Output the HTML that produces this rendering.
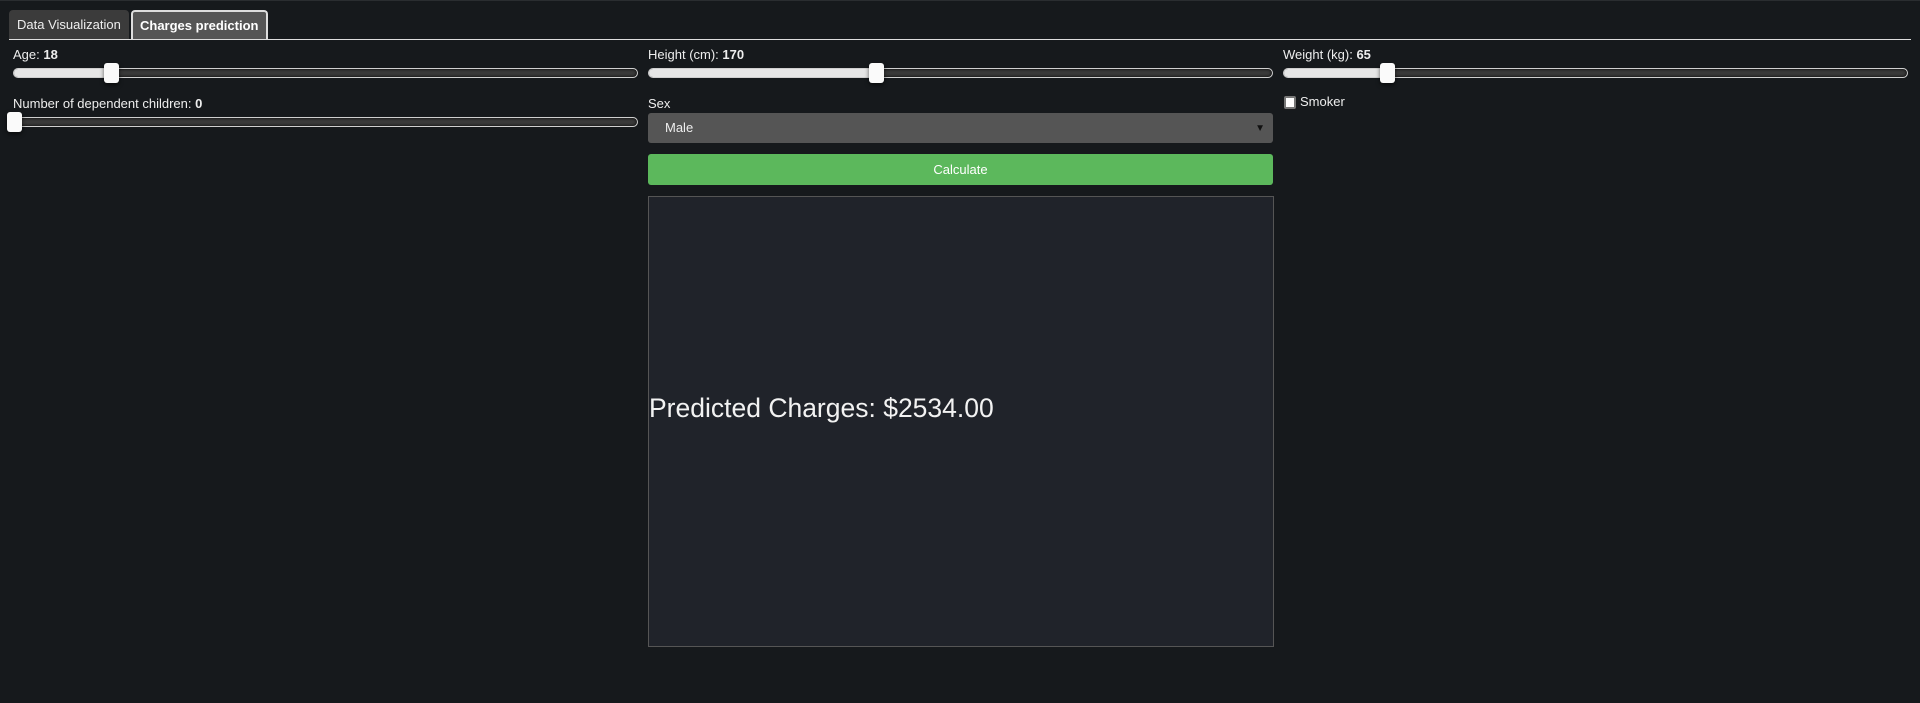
<!DOCTYPE html>
<html><head><style>
*{box-sizing:border-box;margin:0;padding:0}
body{width:1920px;height:703px;background:#16191c;font-family:"Liberation Sans",Arial,sans-serif;color:#e8e8e8;position:relative;overflow:hidden}
.a{position:absolute;white-space:nowrap}
.tab{top:10px;height:29px;font-size:13px;line-height:29px;padding-left:8px;border-radius:4px 4px 0 0}
.lbl{font-size:13px;color:#eee}
.lbl b{font-weight:bold}
.track{height:10px;border-radius:5px;background:#3a3a3a;border:1px solid #cfcfcf;box-shadow:inset 0 0 3px #000}
.fill{position:absolute;left:0;top:0;bottom:0;background:#e6e6e6;border-radius:5px 0 0 5px}
.thumb{width:15px;height:20px;background:#fafafa;border-radius:3px;box-shadow:0 2px 4px rgba(0,0,0,.6)}
</style></head><body>
<div class="a" style="left:0;top:0;width:1920px;height:1px;background:#2a2d30"></div>
<div class="a tab" style="left:9px;width:120px;background:#3b3b3b;color:#eee">Data Visualization</div>
<div class="a tab" style="left:131px;width:137px;background:#555;color:#fff;font-weight:bold;border:2px solid #ddd;border-bottom:none;line-height:27px;padding-left:7px">Charges prediction</div>
<div class="a" style="left:9px;top:39px;width:1902px;height:1px;background:#ddd"></div>

<div class="a lbl" style="left:13px;top:47px">Age: <b>18</b></div>
<div class="a track" style="left:13px;top:68px;width:625px"><div class="fill" style="width:100px"></div></div>
<div class="a thumb" style="left:104px;top:63px"></div>

<div class="a lbl" style="left:13px;top:96px">Number of dependent children: <b>0</b></div>
<div class="a track" style="left:13px;top:117px;width:625px"></div>
<div class="a thumb" style="left:7px;top:112px"></div>

<div class="a lbl" style="left:648px;top:47px">Height (cm): <b>170</b></div>
<div class="a track" style="left:648px;top:68px;width:625px"><div class="fill" style="width:228px"></div></div>
<div class="a thumb" style="left:869px;top:63px"></div>

<div class="a lbl" style="left:648px;top:96px">Sex</div>
<div class="a" style="left:648px;top:113px;width:625px;height:30px;background:#555;border-radius:3px;font-size:13px;line-height:30px;padding-left:17px;color:#eee">Male<span style="position:absolute;right:8px;top:1px;font-size:10px;color:#111">&#9660;</span></div>

<div class="a" style="left:648px;top:154px;width:625px;height:31px;background:#5cb85c;border-radius:3px;font-size:13px;line-height:31px;text-align:center;color:#fff">Calculate</div>

<div class="a" style="left:648px;top:196px;width:626px;height:451px;background:#20232a;border:1px solid #555"></div>
<div class="a" style="left:649px;top:391px;font-size:26.5px;color:#f2f2f2;line-height:34px">Predicted Charges: $2534.00</div>

<div class="a lbl" style="left:1283px;top:47px">Weight (kg): <b>65</b></div>
<div class="a track" style="left:1283px;top:68px;width:625px"><div class="fill" style="width:100px"></div></div>
<div class="a thumb" style="left:1380px;top:63px"></div>

<div class="a" style="left:1284px;top:96px;width:12px;height:13px;background:#fff;border:2px solid #777;border-radius:2px"></div>
<div class="a lbl" style="left:1300px;top:94px">Smoker</div>
</body></html>
